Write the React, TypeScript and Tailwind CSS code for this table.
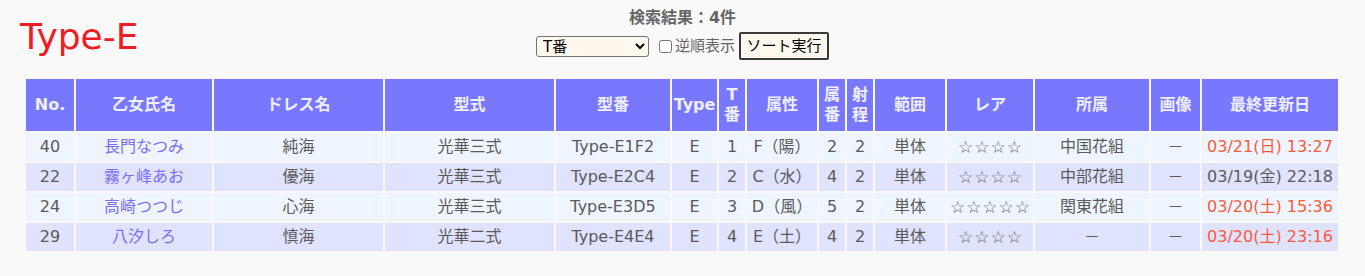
const FONT = '"DejaVu Sans", "Noto Sans CJK JP", sans-serif';

type Row = {
  no: number;
  name: string;
  dress: string;
  model: string;
  code: string;
  type: string;
  t: number;
  attr: string;
  zoku: number;
  range: number;
  scope: string;
  rare: string;
  team: string;
  image: string;
  updated: string;
  recent: boolean;
};

const rows: Row[] = [
  { no: 40, name: '長門なつみ', dress: '純海', model: '光華三式', code: 'Type-E1F2', type: 'E', t: 1, attr: 'F（陽）', zoku: 2, range: 2, scope: '単体', rare: '☆☆☆☆', team: '中国花組', image: '－', updated: '03/21(日) 13:27', recent: true },
  { no: 22, name: '霧ヶ峰あお', dress: '優海', model: '光華三式', code: 'Type-E2C4', type: 'E', t: 2, attr: 'C（水）', zoku: 4, range: 2, scope: '単体', rare: '☆☆☆☆', team: '中部花組', image: '－', updated: '03/19(金) 22:18', recent: false },
  { no: 24, name: '高崎つつじ', dress: '心海', model: '光華三式', code: 'Type-E3D5', type: 'E', t: 3, attr: 'D（風）', zoku: 5, range: 2, scope: '単体', rare: '☆☆☆☆☆', team: '関東花組', image: '－', updated: '03/20(土) 15:36', recent: true },
  { no: 29, name: '八汐しろ', dress: '慎海', model: '光華二式', code: 'Type-E4E4', type: 'E', t: 4, attr: 'E（土）', zoku: 4, range: 2, scope: '単体', rare: '☆☆☆☆', team: '－', image: '－', updated: '03/20(土) 23:16', recent: true },
];

const widths = [48, 136, 169, 169, 114, 45, 26, 70, 26, 26, 70, 86, 114, 49, 136];

const headers: React.ReactNode[] = [
  'No.',
  '乙女氏名',
  'ドレス名',
  '型式',
  '型番',
  'Type',
  <>T<br />番</>,
  '属性',
  <>属<br />番</>,
  <>射<br />程</>,
  '範囲',
  'レア',
  '所属',
  '画像',
  '最終更新日',
];

export default function App() {
  return (
    <div className="min-h-[276px] bg-[#f9f9f9] text-[16px] text-[#5a5a5a]" style={{ fontFamily: FONT }}>
      <div className="grid grid-cols-[1fr_auto_1fr]">
        <div className="pl-[20px] pt-[19px]">
          <h1 className="text-[36px] leading-none font-normal text-[#ee1c25]">Type-E</h1>
        </div>
        <div className="flex flex-col items-center pt-[6px]">
          <p className="text-[16px] leading-[24px] font-bold text-[#666]">検索結果：4件</p>
          <div className="mt-[2px] flex h-[28px] items-center">
            <select
              defaultValue="t"
              className="h-[21px] w-[113px] rounded-[3px] border border-[#767676] bg-[#fff8ee] pl-[2px] text-[15px] leading-none text-black"
            >
              <option value="t">T番</option>
              <option value="no">No.</option>
            </select>
            <label className="ml-[10px] flex items-center text-[15px] text-[#666]">
              <input type="checkbox" className="mr-[3px] h-[13px] w-[13px]" />
              逆順表示
            </label>
            <button className="ml-[4px] h-[28px] w-[90px] rounded-[2px] border-2 border-[#3a3a3a] bg-[#fff8ee] text-[15px] leading-none text-black">
              ソート実行
            </button>
          </div>
        </div>
        <div />
      </div>

      <table className="mt-[17px] ml-[24px] w-[1316px] table-fixed border-separate border-spacing-[2px]">
        <colgroup>
          {widths.map((w, i) => (
            <col key={i} style={{ width: w }} />
          ))}
        </colgroup>
        <thead>
          <tr>
            {headers.map((h, i) => (
              <th key={i} className="h-[52px] bg-[#7878ff] p-0 text-center text-[16px] leading-[20px] font-bold text-[#eeeeff]">
                {h}
              </th>
            ))}
          </tr>
        </thead>
        <tbody>
          {rows.map((r, i) => (
            <tr key={r.no} className={i % 2 === 0 ? 'bg-[#eef5ff]' : 'bg-[#dfe3fe]'}>
              <td className="h-[28px] p-0 text-center">{r.no}</td>
              <td className="p-0 text-center text-[#7a6ef5]">{r.name}</td>
              <td className="p-0 text-center">{r.dress}</td>
              <td className="p-0 text-center">{r.model}</td>
              <td className="p-0 text-center">{r.code}</td>
              <td className="p-0 text-center">{r.type}</td>
              <td className="p-0 text-center">{r.t}</td>
              <td className="p-0 text-center">{r.attr}</td>
              <td className="p-0 text-center">{r.zoku}</td>
              <td className="p-0 text-center">{r.range}</td>
              <td className="p-0 text-center">{r.scope}</td>
              <td className="p-0 pl-[1px] text-center text-[17px] leading-[20px] tracking-[1px] text-[#666]">{r.rare}</td>
              <td className="p-0 text-center">{r.team}</td>
              <td className="p-0 text-center">{r.image}</td>
              <td className={`p-0 text-center ${r.recent ? 'text-[#ff5a3a]' : ''}`}>{r.updated}</td>
            </tr>
          ))}
        </tbody>
      </table>
    </div>
  );
}
